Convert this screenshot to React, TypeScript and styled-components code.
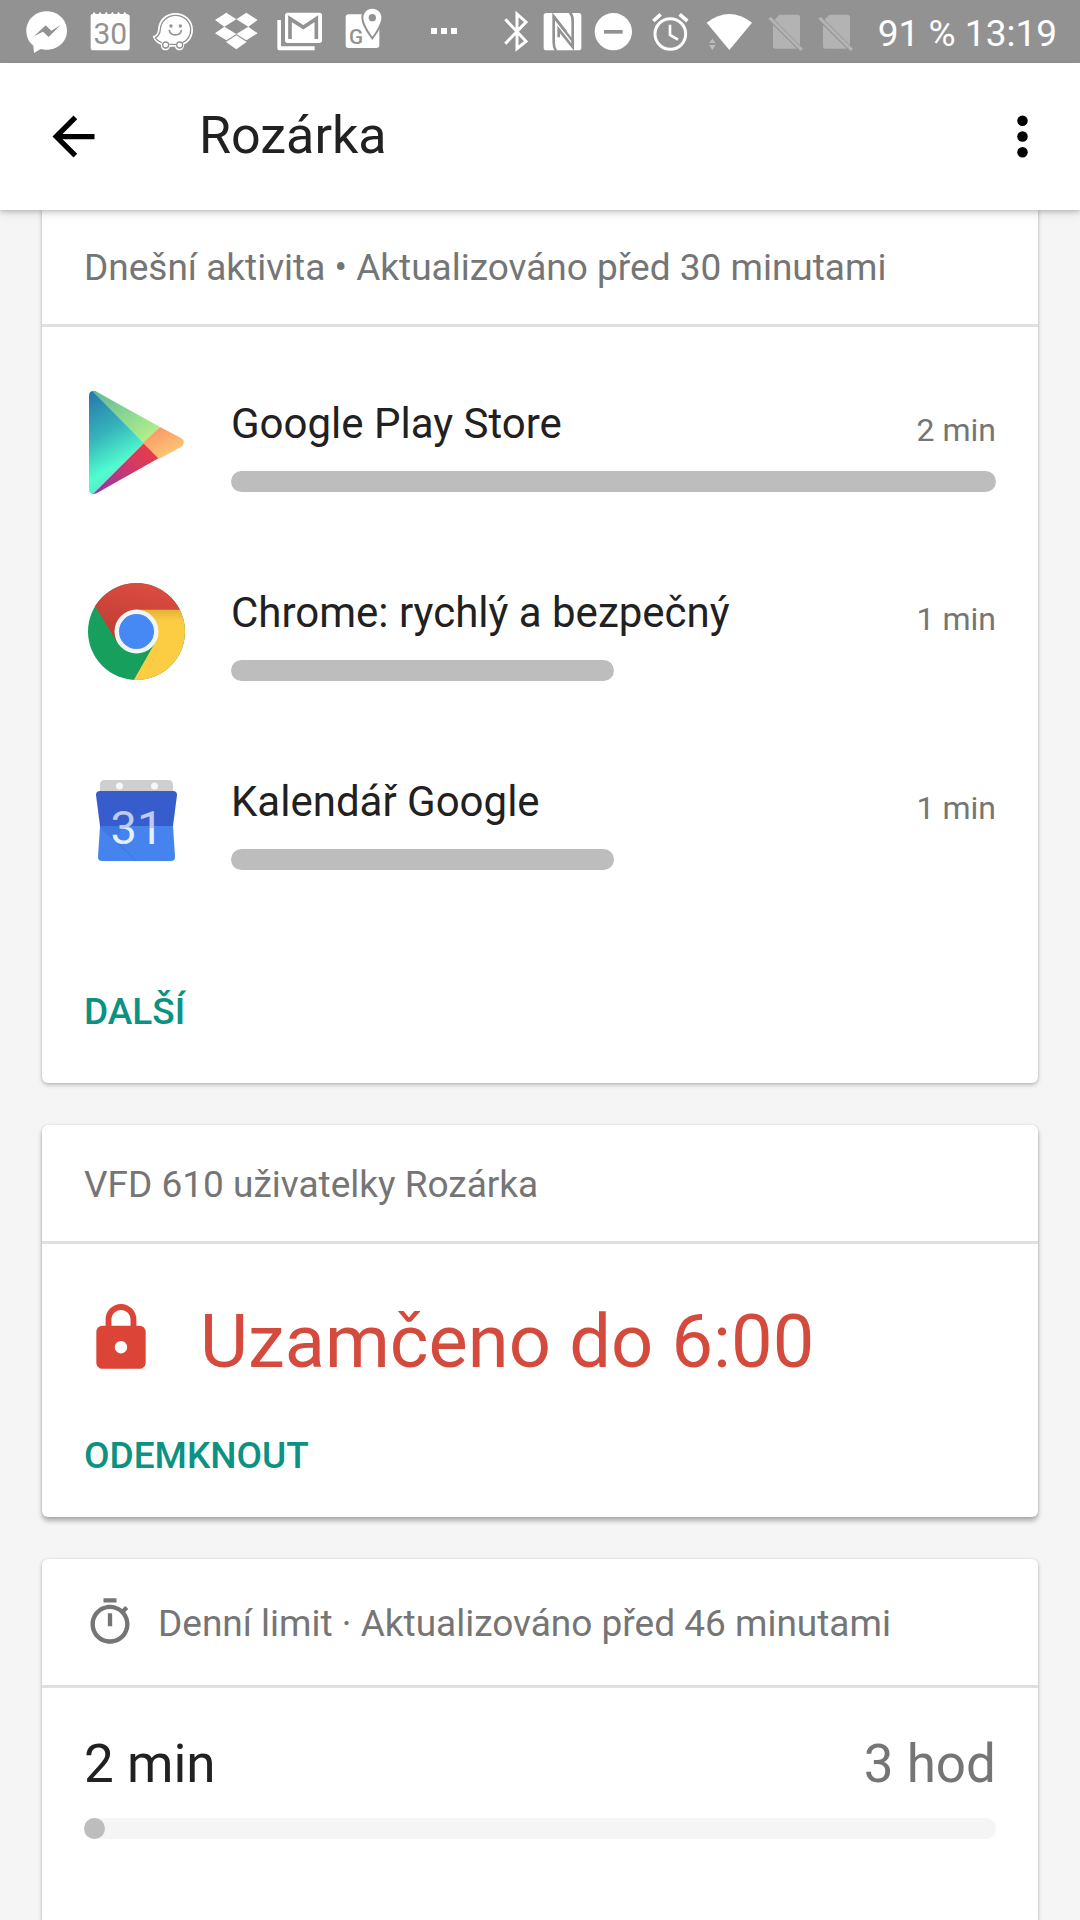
import React from "react";
import styled, { createGlobalStyle } from "styled-components";

const BAR_GREY = "#929292";

const GlobalStyle = createGlobalStyle`
  *, *::before, *::after { box-sizing: border-box; }
  html, body { margin: 0; padding: 0; }
  body {
    background: #f5f5f5;
    color: #212121;
    font-family: Roboto, "Noto Sans", sans-serif;
  }
  svg { display: block; flex: none; }
  h1, h2, p, ul { margin: 0; padding: 0; font-weight: 400; }
`;

const Screen = styled.div`
  display: flex;
  flex-direction: column;
  height: 100vh;
  overflow: hidden;
`;

const StatusBar = styled.div`
  display: flex;
  flex: none;
  justify-content: space-between;
  height: 63px;
  padding: 0 23px 0 22px;
  background: ${BAR_GREY};
  color: #fff;
`;

const StatusGroup = styled.div<{ $gap?: number }>`
  display: flex;
  align-items: center;
  gap: ${({ $gap = 0 }) => $gap}px;
`;

const StatusText = styled.span`
  padding-left: 16px;
  font-size: 37px;
  line-height: 48px;
  padding-top: 4px;
  white-space: pre;
`;

const AppBar = styled.header`
  display: flex;
  flex: none;
  align-items: center;
  height: 147px;
  padding: 0 26px 0 42px;
  background: #fff;
  box-shadow: 0 2px 4px rgba(0, 0, 0, 0.16), 0 4px 10px rgba(0, 0, 0, 0.1);
  z-index: 1;
`;

const IconButton = styled.button`
  flex: none;
  padding: 0;
  border: 0;
  background: none;
  color: #000;
  cursor: pointer;
`;

const Title = styled.h1`
  flex: 1;
  padding: 0 0 2px 94px;
  font-size: 52px;
  line-height: 62px;
`;

const Feed = styled.main`
  display: flex;
  flex: 1;
  flex-direction: column;
  gap: 42px;
  margin-top: -2px;
  padding: 0 42px;
`;

const Card = styled.section<{ $raised?: boolean; $edge?: "top" | "bottom" }>`
  flex: ${({ $edge }) => ($edge === "bottom" ? "1 0 auto" : "none")};
  border-radius: ${({ $edge }) =>
    $edge === "top" ? "0 0 6px 6px" : $edge === "bottom" ? "6px 6px 0 0" : "6px"};
  background: #fff;
  box-shadow: ${({ $raised }) =>
    $raised
      ? "0 4px 5px rgba(0, 0, 0, 0.28), 0 0 3px rgba(0, 0, 0, 0.14)"
      : "0 2px 4px rgba(0, 0, 0, 0.24), 0 0 2px rgba(0, 0, 0, 0.12)"};
`;

const CardHeader = styled.div<{ $tall?: boolean }>`
  display: flex;
  align-items: center;
  gap: 22px;
  padding: ${({ $tall }) => ($tall ? "41px 42px 37px" : "36px 42px 32px")};
  border-bottom: 3px solid #e0e0e0;
  color: #757575;

  svg { margin: -5px 0 0; }
`;

const CardTitle = styled.h2`
  font-size: 37px;
  line-height: 48px;
`;

const AppList = styled.ul`
  padding-top: 21px;
  list-style: none;
`;

const AppRow = styled.li`
  display: flex;
  gap: 42px;
  padding: 42px;
`;

const AppInfo = styled.div`
  flex: 1;
  padding-top: 6px;
`;

const AppLine = styled.div`
  display: flex;
  align-items: flex-end;
  justify-content: space-between;
  margin-bottom: 19px;
`;

const AppName = styled.span`
  font-size: 42px;
  line-height: 56px;
`;

const AppTime = styled.span`
  color: #757575;
  font-size: 32px;
  line-height: 44px;
`;

const Bar = styled.progress<{ $track?: string }>`
  display: block;
  width: 100%;
  height: 21px;
  border: 0;
  border-radius: 11px;
  background: ${({ $track = "transparent" }) => $track};
  appearance: none;

  &::-webkit-progress-bar {
    border-radius: 11px;
    background: ${({ $track = "transparent" }) => $track};
  }
  &::-webkit-progress-value {
    min-width: 21px;
    border-radius: 11px;
    background: #bdbdbd;
  }
  &::-moz-progress-bar {
    border-radius: 11px;
    background: #bdbdbd;
  }
`;

const Actions = styled.div<{ $top: number; $bottom: number }>`
  display: flex;
  padding: ${({ $top, $bottom }) => `${$top}px 42px ${$bottom}px`};
`;

const TextButton = styled.button`
  padding: 0;
  border: 0;
  background: none;
  color: #0b9282;
  font-family: inherit;
  font-size: 37px;
  font-weight: 500;
  line-height: 48px;
  text-transform: uppercase;
  cursor: pointer;
`;

const LockRow = styled.div`
  display: flex;
  gap: 42px;
  padding: 55px 42px 0;
  color: #db4437;

  svg { margin-top: 2px; }
`;

const LockText = styled.p`
  color: #d44b3e;
  font-size: 74px;
  line-height: 86px;
`;

const Limit = styled.div`
  padding: 45px 42px;
`;

const LimitLine = styled.div`
  display: flex;
  justify-content: space-between;
  margin-bottom: 23px;
`;

const LimitValue = styled.span<{ $muted?: boolean }>`
  color: ${({ $muted }) => ($muted ? "#757575" : "#212121")};
  font-size: 53px;
  line-height: 62px;
`;

/* Status glyphs are drawn on a grid of three units to a pixel. */
function Glyph({ x, width, children }: { x: number; width: number; children: React.ReactNode }) {
  return (
    <svg width={width} height={63} viewBox={`${x} 0 ${width * 3} 189`} fill="#fff" aria-hidden="true">
      {children}
    </svg>
  );
}

const NotificationIcons = () => (
  <StatusGroup $gap={15}>
    <Glyph x={66} width={48}>
      <path d="M140 34c-34 0-61 26-61 59 0 18 8 34 21 44l2 22 20-12c6 2 12 2 18 2 34 0 61-25 61-57s-27-58-61-58z" />
      <path d="M102 109l35-33 17 16 27-16-35 35-17-16z" fill={BAR_GREY} />
    </Glyph>
    <Glyph x={255} width={48}>
      <path d="M272 48q0-6 6-6l4-7 5 7h9l4-7 5 7h9l5-7 4 7h10l4-7 5 7h9l5-7 4 7h10l4-7 5 7q10 0 10 8v93q0 8-8 8H281q-9 0-9-8z" />
      <text x="331" y="131" textAnchor="middle" fontFamily="Roboto, sans-serif" fontSize="90" fill={BAR_GREY}>30</text>
    </Glyph>
    <Glyph x={444} width={48}>
      <path d="M458 108c12-2 15-10 16-22 3-28 24-47 52-47 30 0 53 22 53 50 0 20-10 36-27 45 1 10-6 17-13 17-8 0-13-5-14-11h-15c-2 7-7 11-14 11-8 0-14-7-13-16-12-5-21-13-25-27z" />
      <path d="M465 113c11-4 15-13 16-25 2-24 21-42 45-42 26 0 46 19 46 43 0 18-11 33-26 40M485 128c-9-3-15-8-20-15M508 133h20" fill="none" stroke={BAR_GREY} strokeWidth="4" />
      <circle cx="497" cy="135" r="9" fill="none" stroke={BAR_GREY} strokeWidth="4" />
      <circle cx="539" cy="135" r="9" fill="none" stroke={BAR_GREY} strokeWidth="4" />
      <circle cx="513" cy="78" r="5" fill={BAR_GREY} />
      <circle cx="541" cy="78" r="5" fill={BAR_GREY} />
      <path d="M508 92c4 17 32 17 36 0" fill="none" stroke={BAR_GREY} strokeWidth="5" strokeLinecap="round" />
    </Glyph>
    <Glyph x={633} width={48}>
      <path d="M679 38l30 20-36 22-28-20zM739 38l34 22-28 20-36-22zM673 80l36 22-30 19-34-21zM745 80l28 20-34 21-30-19zM709 106l31 20-31 22-31-22z" />
    </Glyph>
    <Glyph x={822} width={48}>
      <path d="M832 60h11v79h101v12H840q-8 0-8-8z" />
      <rect x="855" y="38" width="111" height="91" rx="8" />
      <path d="M870 117V56l40 26 39-26v61" fill="none" stroke={BAR_GREY} strokeWidth="11" />
    </Glyph>
    <Glyph x={1011} width={48}>
      <rect x="1037" y="43" width="101" height="101" rx="9" />
      <text x="1068" y="132" textAnchor="middle" fontFamily="Roboto, sans-serif" fontWeight="500" fontSize="62" fill={BAR_GREY}>G</text>
      <path d="M1117 26c-16 0-27 12-27 27 0 20 27 57 27 57s27-37 27-57c0-15-11-27-27-27z" stroke={BAR_GREY} strokeWidth="12" paintOrder="stroke" />
      <circle cx="1117" cy="53" r="11" fill={BAR_GREY} />
    </Glyph>
  </StatusGroup>
);

const SimGlyph = () => (
  <Glyph x={186} width={50}>
    <g opacity="0.3">
      <path d="M238 44h54q8 0 8 8v84L224 59zM219 75l72 71h-64q-8 0-8-8z" />
      <path d="M205 56l7-6 97 97-7 6z" />
    </g>
  </Glyph>
);

const SystemIcons = () => (
  <StatusGroup>
    <Glyph x={273} width={48}>
      <path d="M316 58l62 66-27 22V42l27 24-62 65" fill="none" stroke="#fff" strokeWidth="9" />
    </Glyph>
    <Glyph x={417} width={50}>
      <rect x="431" y="39" width="113" height="112" rx="8" />
      <path d="M468 153q-7-10-7-26V49l36 46M510 37q8 10 8 26v78l-42-53v24" fill="none" stroke={BAR_GREY} strokeWidth="8" />
      <path d="M461 49l57 74" fill="none" stroke={BAR_GREY} strokeWidth="7" />
    </Glyph>
    <Glyph x={567} width={50}>
      <circle cx="640" cy="95" r="56" />
      <rect x="612" y="90" width="56" height="11" fill={BAR_GREY} />
    </Glyph>
    <Glyph x={717} width={63}>
      <g fill="none" stroke="#fff">
        <circle cx="811" cy="102" r="46" strokeWidth="9" />
        <path d="M810 74v31l24 14" strokeWidth="8" />
        <path d="M760 63l22-20M839 43l23 20" strokeWidth="11" />
      </g>
    </Glyph>
    <Glyph x={6} width={60}>
      <path d="M20 68Q88 16 156 68L88 150z" />
      <path d="M27 129l10-13 10 13zM27 135h20l-10 15z" opacity="0.4" />
    </Glyph>
    <SimGlyph />
    <SimGlyph />
    <StatusText>91 % 13:19</StatusText>
  </StatusGroup>
);

const PlayIcon = () => (
  <svg width={105} height={105} viewBox="0 0 105 105" aria-hidden="true">
    <defs>
      <linearGradient id="play-blue" x1="0" y1="0" x2="0.3" y2="1">
        <stop offset="0" stopColor="#2476ab" />
        <stop offset="0.45" stopColor="#37b3ba" />
        <stop offset="0.8" stopColor="#50fdd0" />
        <stop offset="1" stopColor="#55e8c6" />
      </linearGradient>
      <linearGradient id="play-green" x1="0" y1="0" x2="1" y2="1">
        <stop offset="0" stopColor="#5fb89b" />
        <stop offset="1" stopColor="#bdf786" />
      </linearGradient>
      <linearGradient id="play-red" x1="0" y1="1" x2="1" y2="0">
        <stop offset="0" stopColor="#8a35b4" />
        <stop offset="0.6" stopColor="#d43a60" />
        <stop offset="1" stopColor="#ee3e42" />
      </linearGradient>
      <linearGradient id="play-orange" x1="0" y1="0" x2="0.6" y2="1">
        <stop offset="0" stopColor="#f58f63" />
        <stop offset="1" stopColor="#ffc977" />
      </linearGradient>
    </defs>
    <path d="M9 1Q5 1 5 6v93q0 5 4 5l51-51z" fill="url(#play-blue)" />
    <path d="M8 1q3-1 5 1l63 35-16 16z" fill="url(#play-green)" />
    <path d="M60 53l15 15-62 35q-2 1-4 1z" fill="url(#play-red)" />
    <path d="M76 37l21 11q6 4 0 9L75 69 59 53z" fill="url(#play-orange)" />
  </svg>
);

const ChromeIcon = () => (
  <svg width={105} height={105} viewBox="0 0 105 105" aria-hidden="true">
    <defs>
      <clipPath id="chrome-disc">
        <circle cx="52.5" cy="52.5" r="48.5" />
      </clipPath>
      <linearGradient id="chrome-red" x1="0" y1="1" x2="0.4" y2="0">
        <stop offset="0" stopColor="#b83b30" />
        <stop offset="1" stopColor="#dc4b40" />
      </linearGradient>
      <linearGradient id="chrome-green" x1="0.1" y1="0.5" x2="1" y2="0.9">
        <stop offset="0.5" stopColor="#17a05d" />
        <stop offset="1" stopColor="#107d45" />
      </linearGradient>
      <linearGradient id="chrome-yellow" x1="0" y1="0" x2="0" y2="1">
        <stop offset="0" stopColor="#e2b23a" />
        <stop offset="0.16" stopColor="#fccd43" />
      </linearGradient>
    </defs>
    <g clipPath="url(#chrome-disc)">
      <rect width="105" height="105" fill="url(#chrome-green)" />
      <path d="M52 30.500h53V105H47.500L72 62z" fill="url(#chrome-yellow)" />
      <path d="M0 9V0h105v30.500H52.500V63H33z" fill="url(#chrome-red)" />
    </g>
    <circle cx="52.5" cy="52.5" r="22" fill="#f1f5f9" />
    <circle cx="52.5" cy="52.5" r="17.500" fill="#4688f4" />
  </svg>
);

const CalendarIcon = () => (
  <svg width={105} height={105} viewBox="0 0 105 105" aria-hidden="true">
    <defs>
      <linearGradient id="calendar-ink" x1="0" y1="0" x2="0" y2="1">
        <stop offset="0.5" stopColor="#bccbf2" />
        <stop offset="0.5" stopColor="#e6effd" />
      </linearGradient>
    </defs>
    <path d="M16 26V17q0-5 5-5h63q5 0 5 5v9z" fill="#cfcfcf" />
    <circle cx="35.500" cy="18" r="3.500" fill="#f7f7f7" />
    <circle cx="70.500" cy="18" r="3.500" fill="#f7f7f7" />
    <path d="M16 58h73l2 31q0 4-4 4H18q-4 0-4-4z" fill="#4584ee" />
    <path d="M16 58h22l-5 15 20 20h-1L16 60z" fill="#3f78e0" />
    <path d="M12 27q0-4 4-4h73q4 0 4 4l-4 31H16z" fill="#375dcd" />
    <text x="53" y="76" textAnchor="middle" fontFamily="Roboto, sans-serif" fontSize="47" fill="url(#calendar-ink)">31</text>
  </svg>
);

const apps = [
  { name: "Google Play Store", minutes: 2, icon: <PlayIcon /> },
  { name: "Chrome: rychlý a bezpečný", minutes: 1, icon: <ChromeIcon /> },
  { name: "Kalendář Google", minutes: 1, icon: <CalendarIcon /> },
];

export default function App() {
  return (
    <Screen>
      <GlobalStyle />
      <StatusBar>
        <NotificationIcons />
        <Glyph x={57} width={38}>
          <path d="M93 84h18v18H93zM123 84h18v18h-18zM153 84h18v18h-18z" />
        </Glyph>
        <SystemIcons />
      </StatusBar>

      <AppBar>
        <IconButton aria-label="Zpět">
          <svg width={63} height={63} viewBox="0 0 24 24" fill="currentColor">
            <path d="M20 11H7.830l5.590-5.590L12 4l-8 8 8 8 1.410-1.410L7.830 13H20v-2z" />
          </svg>
        </IconButton>
        <Title>Rozárka</Title>
        <IconButton aria-label="Další možnosti">
          <svg width={63} height={63} viewBox="0 0 24 24" fill="currentColor">
            <circle cx="12" cy="6" r="2" />
            <circle cx="12" cy="12" r="2" />
            <circle cx="12" cy="18" r="2" />
          </svg>
        </IconButton>
      </AppBar>

      <Feed>
        <Card $edge="top">
          <CardHeader>
            <CardTitle>Dnešní aktivita • Aktualizováno před 30 minutami</CardTitle>
          </CardHeader>
          <AppList>
            {apps.map(({ name, minutes, icon }) => (
              <AppRow key={name}>
                {icon}
                <AppInfo>
                  <AppLine>
                    <AppName>{name}</AppName>
                    <AppTime>{minutes} min</AppTime>
                  </AppLine>
                  <Bar value={minutes} max={2} aria-label={name} />
                </AppInfo>
              </AppRow>
            ))}
          </AppList>
          <Actions $top={73} $bottom={47}>
            <TextButton>Další</TextButton>
          </Actions>
        </Card>

        <Card $raised>
          <CardHeader>
            <CardTitle>VFD 610 uživatelky Rozárka</CardTitle>
          </CardHeader>
          <LockRow>
            <svg width={74} height={74} viewBox="0 0 24 24" fill="currentColor" aria-hidden="true">
              <path d="M18 8h-1V6c0-2.760-2.240-5-5-5S7 3.240 7 6v2H6c-1.100 0-2 .9-2 2v10c0 1.100.9 2 2 2h12c1.100 0 2-.9 2-2V10c0-1.100-.9-2-2-2zm-6 9c-1.100 0-2-.9-2-2s.9-2 2-2 2 .9 2 2-.9 2-2 2zm3.100-9H8.900V6c0-1.710 1.390-3.100 3.100-3.100s3.100 1.390 3.100 3.100v2z" />
            </svg>
            <LockText>Uzamčeno do 6:00</LockText>
          </LockRow>
          <Actions $top={47} $bottom={37}>
            <TextButton>Odemknout</TextButton>
          </Actions>
        </Card>

        <Card $edge="bottom">
          <CardHeader $tall>
            <svg width={52} height={52} viewBox="0 0 24 24" fill="currentColor" aria-hidden="true">
              <path d="M15 1H9v2h6V1zm-4 13h2V8h-2v6zm8.030-6.610l1.420-1.420c-.43-.51-.9-.99-1.410-1.410l-1.420 1.420C16.070 4.740 14.120 4 12 4c-4.970 0-9 4.030-9 9s4.020 9 9 9 9-4.030 9-9c0-2.120-.74-4.070-1.970-5.610zM12 20c-3.870 0-7-3.130-7-7s3.130-7 7-7 7 3.130 7 7-3.130 7-7 7z" />
            </svg>
            <CardTitle>Denní limit · Aktualizováno před 46 minutami</CardTitle>
          </CardHeader>
          <Limit>
            <LimitLine>
              <LimitValue>2 min</LimitValue>
              <LimitValue $muted>3 hod</LimitValue>
            </LimitLine>
            <Bar $track="#f5f5f5" value={2} max={180} aria-label="Denní limit" />
          </Limit>
        </Card>
      </Feed>
    </Screen>
  );
}
